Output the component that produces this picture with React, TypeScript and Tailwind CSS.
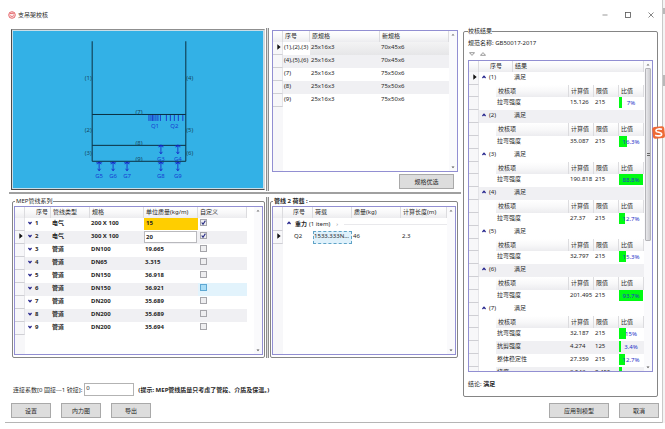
import React from "react";

type Pipe = { id: number; kind: string; spec: string; mass: string; custom: boolean };
type Check = { name: string; value: string; limit: string; ratio: number };
type Result = { id: string; checks: Check[] };

const specs = [
  ["(1),(2),(3)", "25x16x3", "70x45x6"],
  ["(4),(5),(6)", "25x16x3", "70x45x6"],
  ["(7)", "25x16x3", "75x50x6"],
  ["(8)", "25x16x3", "75x50x6"],
  ["(9)", "25x16x3", "75x50x6"],
];

const pipes: Pipe[] = [
  { id: 1, kind: "电气", spec: "200 X 100", mass: "15", custom: true },
  { id: 2, kind: "电气", spec: "300 X 100", mass: "20", custom: true },
  { id: 3, kind: "管道", spec: "DN100", mass: "19.665", custom: false },
  { id: 4, kind: "管道", spec: "DN65", mass: "3.315", custom: false },
  { id: 5, kind: "管道", spec: "DN150", mass: "36.918", custom: false },
  { id: 6, kind: "管道", spec: "DN150", mass: "36.921", custom: false },
  { id: 7, kind: "管道", spec: "DN200", mass: "35.689", custom: false },
  { id: 8, kind: "管道", spec: "DN200", mass: "35.689", custom: false },
  { id: 9, kind: "管道", spec: "DN200", mass: "35.694", custom: false },
];

const results: Result[] = [
  { id: "(1)", checks: [{ name: "拉弯强度", value: "15.126", limit: "215", ratio: 7 }] },
  { id: "(2)", checks: [{ name: "拉弯强度", value: "35.087", limit: "215", ratio: 16.3 }] },
  { id: "(3)", checks: [{ name: "拉弯强度", value: "190.818", limit: "215", ratio: 88.8 }] },
  { id: "(4)", checks: [{ name: "拉弯强度", value: "27.37", limit: "215", ratio: 12.7 }] },
  { id: "(5)", checks: [{ name: "拉弯强度", value: "32.797", limit: "215", ratio: 15.3 }] },
  { id: "(6)", checks: [{ name: "拉弯强度", value: "201.495", limit: "215", ratio: 93.7 }] },
  {
    id: "(7)",
    checks: [
      { name: "抗弯强度", value: "32.187", limit: "215", ratio: 15 },
      { name: "抗剪强度", value: "4.274", limit: "125", ratio: 3.4 },
      { name: "整体稳定性", value: "27.359", limit: "215", ratio: 12.7 },
      { name: "挠度", value: "0.543", limit: "8.455", ratio: 6.4 },
    ],
  },
];

const headCell =
  "border-r border-[#dcdcdf] bg-linear-to-b from-white via-[#f8f8f9] to-[#ececef] p-0 pl-[2px] text-left align-middle font-normal leading-[11px] whitespace-nowrap";
const gutter = "border-r border-b border-r-[#e4e4e8] border-b-[#cfcfd4] bg-[#f7f7f9] p-0 align-top";
const cell = "overflow-hidden p-0 pl-[1px] align-top leading-[10px] whitespace-nowrap";

function Marker() {
  return (
    <svg viewBox="0 0 4 6" className="mt-[2px] ml-[4px] block h-[6px] w-[4px]">
      <path d="M0.3 0.3 3.7 3 0.3 5.7Z" fill="#111" />
    </svg>
  );
}

function Chevron({ up = false }: { up?: boolean }) {
  return (
    <svg viewBox="0 0 4 4" className="mt-[3px] block size-[4px]">
      <path
        d={up ? "M0.4 3 2 1.3 3.6 3" : "M0.4 1 2 2.7 3.6 1"}
        fill="none"
        stroke="#23238c"
        strokeWidth="1.3"
      />
    </svg>
  );
}

function ScrollBar({ thumb = false }: { thumb?: boolean }) {
  return (
    <div className="flex w-[8px] shrink-0 flex-col items-center bg-[#fafafc] py-[2px]">
      <svg viewBox="0 0 4 3" className="h-[3px] w-[4px]">
        <path d="M0.5 2.5 2 0.7 3.5 2.5Z" fill="#777" />
      </svg>
      <div className="flex w-full flex-1 flex-col px-px pt-[2px]">
        {thumb && (
          <div className="flex h-[173px] flex-col items-center justify-center gap-px rounded-[1px] border border-[#b4b4b8] bg-linear-to-r from-[#e9e9ec] to-[#cdcdd1]">
            <i className="h-px w-[3px] bg-[#666]" />
            <i className="h-px w-[3px] bg-[#666]" />
          </div>
        )}
      </div>
      <svg viewBox="0 0 4 3" className="h-[3px] w-[4px]">
        <path d="M0.5 0.5 2 2.3 3.5 0.5Z" fill="#555" />
      </svg>
    </div>
  );
}

function Grid({ children, className = "", thumb = false }: { children: React.ReactNode; className?: string; thumb?: boolean }) {
  return (
    <div className={`flex overflow-hidden border border-[#928fd2] bg-white ${className}`}>
      <div className="flex min-w-0 flex-1 flex-col">
        {children}
        <div className="w-[10px] flex-1 bg-[#f7f7f9]" />
      </div>
      <ScrollBar thumb={thumb} />
    </div>
  );
}

function Button({ children, className = "" }: { children: React.ReactNode; className?: string }) {
  return (
    <button className={`h-[15px] shrink-0 border border-[#a9a9a9] bg-[#dddddd] leading-[12px] ${className}`}>
      {children}
    </button>
  );
}

function Load({ x, y, label }: { x: number; y: number; label: string }) {
  return (
    <g>
      <path
        d={`M${x} ${y}V${y + 9}M${x - 3} ${y + 1}H${x + 3}M${x - 2} ${y + 2.5}L${x} ${y}L${x + 2} ${y + 2.5}M${x - 1.5} ${y + 7}L${x} ${y + 9}L${x + 1.5} ${y + 7}`}
        stroke="#1422c8"
        strokeWidth="0.8"
        fill="none"
      />
      <text x={x} y={y + 16.5} textAnchor="middle" fill="#1740d2">
        {label}
      </text>
    </g>
  );
}

function FrameDrawing() {
  const members: [number, number, string][] = [
    [75.5, 49, "(1)"],
    [75.5, 101, "(2)"],
    [75.5, 124, "(3)"],
    [177.5, 49, "(4)"],
    [177.5, 101, "(5)"],
    [177.5, 124, "(6)"],
    [126.5, 83, "(7)"],
    [126.5, 114, "(8)"],
    [126.5, 130, "(9)"],
  ];
  const ticks = [136.5, 138.5, 140, 141.5, 143.5, 145.5, 148, 154, 158, 162, 166, 170.5];
  return (
    <svg viewBox="0 0 251 157" className="block h-[157px] w-full text-[6px]">
      <path
        d="M79.5 10V130.5H173.5V10M79.5 83.5H173.5M79.5 114.5H173.5"
        fill="none"
        stroke="#0b2e3f"
        strokeWidth="1"
      />
      {members.map(([x, y, t]) => (
        <text key={t} x={x} y={y} textAnchor="middle" fill="#17475f">
          {t}
        </text>
      ))}
      {ticks.map((x) => (
        <path key={x} d={`M${x} 84V90`} stroke="#1422c8" strokeWidth="0.8" />
      ))}
      <text x="142.5" y="97" textAnchor="middle" fill="#1740d2">Q1</text>
      <text x="162" y="97" textAnchor="middle" fill="#1740d2">Q2</text>
      <Load x={148.5} y={114} label="G3" />
      <Load x={165.5} y={114} label="G4" />
      <Load x={86.5} y={131} label="G5" />
      <Load x={100.5} y={131} label="G6" />
      <Load x={114.5} y={131} label="G7" />
      <Load x={148.5} y={131} label="G8" />
      <Load x={165.5} y={131} label="G9" />
    </svg>
  );
}

function SpecTable() {
  return (
    <table className="w-full table-fixed border-separate border-spacing-0">
      <colgroup>
        <col className="w-[10px]" />
        <col className="w-[27px]" />
        <col className="w-[70px]" />
        <col />
      </colgroup>
      <thead>
        <tr>
          <th className={headCell} />
          <th className={headCell}>序号</th>
          <th className={headCell}>原规格</th>
          <th className={headCell}>新规格</th>
        </tr>
      </thead>
      <tbody>
        {specs.map((row, i) => (
          <tr key={row[0]} className={i % 2 ? "h-[13px] bg-[#f0f0f3]" : "h-[13px]"}>
            <td className={gutter}>{i === 0 && <Marker />}</td>
            {row.map((text, c) => (
              <td
                key={c}
                className={`${cell} ${i === 0 && c > 0 ? "bg-linear-to-b from-[#f3f3f4] to-[#e6e6e8]" : ""}`}
              >
                {text}
              </td>
            ))}
          </tr>
        ))}
      </tbody>
    </table>
  );
}

function PipeTable() {
  return (
    <table className="w-full table-fixed border-separate border-spacing-0">
      <colgroup>
        <col className="w-[10px]" />
        <col className="w-[9px]" />
        <col className="w-[17px]" />
        <col className="w-[39px]" />
        <col className="w-[54px]" />
        <col className="w-[54px]" />
        <col className="w-[49px]" />
        <col />
      </colgroup>
      <thead>
        <tr>
          <th className={headCell} />
          <th colSpan={2} className={headCell}>
            <span className="pl-[9px]">序号</span>
          </th>
          <th className={headCell}>管线类型</th>
          <th className={headCell}>规格</th>
          <th className={headCell}>单位质量(kg/m)</th>
          <th className={headCell}>自定义</th>
          <th className="p-0" />
        </tr>
      </thead>
      <tbody className="font-bold">
        {pipes.map((p, i) => {
          const stripe = i % 2 ? "bg-[#f0f0f3]" : "";
          return (
            <tr key={p.id} className="h-[13px]">
              <td className={gutter}>{p.id === 2 && <Marker />}</td>
              <td className={`p-0 pl-[3px] align-top ${stripe}`}>
                <Chevron />
              </td>
              <td className={`${cell} ${stripe}`}>{p.id}</td>
              <td className={`${cell} ${stripe}`}>{p.kind}</td>
              <td className={`${cell} ${stripe}`}>{p.spec}</td>
              <td className={`${cell} ${stripe}`}>
                {p.id === 1 ? (
                  <div className="-ml-px h-[12px] bg-[#ffce00] pl-[2px] leading-[10px]">{p.mass}</div>
                ) : p.id === 2 ? (
                  <input
                    aria-label="单位质量"
                    defaultValue={p.mass}
                    className="-ml-px block h-[12px] w-[53px] border border-[#b9b9bd] bg-white pl-px leading-[10px]"
                  />
                ) : (
                  p.mass
                )}
              </td>
              <td className={`p-0 pl-[2px] align-top ${p.id === 6 ? "bg-[#e2f3fc]" : stripe}`}>
                <label className="relative mt-px block size-[7px]">
                  <input
                    type="checkbox"
                    aria-label={`自定义 ${p.id}`}
                    defaultChecked={p.custom}
                    className={`peer block size-[7px] appearance-none border ${
                      p.id === 6 ? "border-[#5fa8d3] bg-[#a9dcf5]" : "border-[#a5a5aa] bg-[#eeeef0]"
                    }`}
                  />
                  <svg viewBox="0 0 7 7" className="absolute inset-0 hidden size-[7px] peer-checked:block">
                    <path d="M1.7 3.5 3 5.2 5.4 1.6" fill="none" stroke="#2b2f86" strokeWidth="1.1" />
                  </svg>
                </label>
              </td>
              <td className="p-0" />
            </tr>
          );
        })}
      </tbody>
    </table>
  );
}

function LoadTable() {
  return (
    <table className="w-full table-fixed border-separate border-spacing-0">
      <colgroup>
        <col className="w-[10px]" />
        <col className="w-[10px]" />
        <col className="w-[20px]" />
        <col className="w-[39px]" />
        <col className="w-[49px]" />
        <col />
      </colgroup>
      <thead>
        <tr>
          <th className={headCell} />
          <th colSpan={2} className={headCell}>
            <span className="pl-[8px]">序号</span>
          </th>
          <th className={headCell}>荷载</th>
          <th className={headCell}>质量(kg)</th>
          <th className={headCell}>计算长度(m)</th>
        </tr>
      </thead>
      <tbody>
        <tr className="h-[13px]">
          <td className={gutter} />
          <td className="p-0 pl-[4px] align-top">
            <Chevron up />
          </td>
          <td colSpan={4} className="p-0 pl-[2px] align-top leading-[12px]">
            <div className="flex items-center">
              <b>重力</b>
              <span className="pl-[2px]">(1 item)</span>
              <span className="px-[6px] text-[#888]">›</span>
              <span className="h-px flex-1 bg-[#e9e9ec]" />
            </div>
          </td>
        </tr>
        <tr className="h-[13px]">
          <td className={gutter}>
            <Marker />
          </td>
          <td className="p-0" />
          <td className={cell}>Q2</td>
          <td className="p-0 align-top">
            <div className="h-[13px] overflow-hidden border border-dashed border-[#5fa3c7] bg-[#dff1fb] leading-[9px] text-ellipsis whitespace-nowrap">
              1533.333N/m
            </div>
          </td>
          <td className={cell}>46</td>
          <td className={cell}>2.3</td>
        </tr>
      </tbody>
    </table>
  );
}

function ResultTable() {
  return (
    <table className="w-full shrink-0 table-fixed border-separate border-spacing-0">
      <colgroup>
        <col className="w-[10px]" />
        <col className="w-[9px]" />
        <col className="w-[8px]" />
        <col className="w-[17px]" />
        <col />
        <col className="w-[25px]" />
        <col className="w-[25px]" />
        <col className="w-[25px]" />
      </colgroup>
      <thead>
        <tr>
          <th className={headCell} />
          <th colSpan={3} className={headCell}>
            <span className="pl-[9px]">序号</span>
          </th>
          <th colSpan={4} className={headCell}>结果</th>
        </tr>
      </thead>
      <tbody>
        {results.map((r, i) => {
          const stripe = i % 2 ? "bg-[#f0f0f3]" : "";
          return (
            <React.Fragment key={r.id}>
              <tr className="h-[13px]">
                <td className={gutter}>{i === 0 && <Marker />}</td>
                <td className={`p-0 pl-[3px] align-top ${stripe}`}>
                  <Chevron up />
                </td>
                <td colSpan={2} className={`${cell} ${stripe}`}>{r.id}</td>
                <td colSpan={4} className={`${cell} ${stripe}`}>满足</td>
              </tr>
              <tr className={i % 2 ? "h-[13px]" : "h-[12px]"}>
                <td className={gutter} />
                <td colSpan={2} className="p-0" />
                <th colSpan={2} className={headCell}>校核项</th>
                <th className={headCell}>计算值</th>
                <th className={headCell}>限值</th>
                <th className={headCell}>比值</th>
              </tr>
              {r.checks.map((c, j) => {
                const shade = j % 2 ? "bg-[#f0f0f3]" : "";
                return (
                  <tr key={c.name} className="h-[13px]">
                    <td className={gutter} />
                    <td colSpan={2} className="p-0" />
                    <td colSpan={2} className={`${cell} ${shade}`}>{c.name}</td>
                    <td className={`${cell} ${shade}`}>{c.value}</td>
                    <td className={`${cell} ${shade}`}>{c.limit}</td>
                    <td className={`p-0 align-top ${shade}`}>
                      <div className="relative h-[11px] w-[24px]">
                        <div className="h-[11px] bg-[#00fb12]" style={{ width: `${Math.min(c.ratio * 2, 100)}%` }} />
                        <span className="absolute inset-0 text-center leading-[12px] text-[#2430c8]">{c.ratio}%</span>
                      </div>
                    </td>
                  </tr>
                );
              })}
            </React.Fragment>
          );
        })}
      </tbody>
    </table>
  );
}

export default function App() {
  return (
    <div className="relative flex bg-white font-['Noto_Sans','Noto_Sans_CJK_SC',sans-serif] text-[6px] leading-[10px] text-[#262626]">
      <div className="ml-[5px] flex min-w-0 flex-1 flex-col border-b border-[#b5b5b5] pb-[4px]">
        <header className="flex h-[28px] items-center pt-[2px] pr-[8px] pl-[3px]">
          <svg viewBox="0 0 8 8" className="size-[8px]">
            <circle cx="4" cy="4" r="3.3" fill="#fdeeee" stroke="#e0474c" strokeWidth="0.8" />
            <path d="M1.8 3.2 3 2 3.6 3 4.5 1.8 5 3 6.2 2.6M2 4.6Q4 6.8 6.2 4.4" fill="none" stroke="#e0474c" strokeWidth="0.7" />
          </svg>
          <h1 className="flex-1 pl-[2px]">支吊架校核</h1>
          <div className="flex items-center gap-[17px] text-[#555]">
            <button aria-label="最小化">
              <svg viewBox="0 0 6 6" className="block size-[6px]">
                <path d="M0.5 3H5.5" stroke="currentColor" strokeWidth="0.6" />
              </svg>
            </button>
            <button aria-label="最大化">
              <svg viewBox="0 0 6 6" className="block size-[6px]">
                <rect x="0.5" y="0.5" width="5" height="5" fill="none" stroke="currentColor" strokeWidth="0.8" />
              </svg>
            </button>
            <button aria-label="关闭">
              <svg viewBox="0 0 6 6" className="block size-[6px]">
                <path d="M0.5 0.5 5.5 5.5M5.5 0.5 0.5 5.5" stroke="currentColor" strokeWidth="0.7" />
              </svg>
            </button>
          </div>
        </header>

        <div className="flex gap-[2px] pr-[4px] pl-[4px]">
          <main className="flex min-w-0 flex-1 flex-col">
            <div className="flex h-[163px]">
              <div className="min-w-0 flex-1 pt-px pr-px pl-[2px]">
                <div className="border border-t-[#8f8f8f] border-r-[#d5d5d5] border-b-[#4c4c4c] border-l-[#4c4c4c]">
                  <div className="border border-[#c9dde6] bg-[#33b1e6]">
                    <FrameDrawing />
                  </div>
                </div>
              </div>
              <div className="w-[3px] border-x border-[#8d8d8d] bg-[#dedede]" />
              <div className="flex w-[192px] flex-col pt-[2px] pr-[3px] pl-[3px]">
                <Grid className="h-[142px]">
                  <SpecTable />
                </Grid>
                <div className="flex justify-end pt-[2px] pr-[4px]">
                  <Button className="w-[55px]">规格优选</Button>
                </div>
              </div>
            </div>
            <div className="mt-px h-[2px] bg-[#a0a0a0]" />
            <div className="flex h-[164px] pt-[3px]">
              <fieldset className="mr-px ml-[3px] min-w-0 flex-1 rounded-[2px] border border-[#858585] px-px pb-px">
                <legend className="ml-[1px] h-[9px] px-[1px] leading-[8px]">MEP管线系列</legend>
                <Grid className="h-[149px]">
                  <PipeTable />
                </Grid>
              </fieldset>
              <div className="w-[3px] border-x border-[#8d8d8d] bg-[#dedede]" />
              <div className="flex w-[192px] pr-[3px] pl-px">
                <fieldset className="min-w-0 flex-1 rounded-[2px] border border-[#858585] px-px pb-px">
                  <legend className="ml-[1px] h-[9px] px-[1px] leading-[8px] font-bold">管线 2 荷载 :</legend>
                  <Grid className="h-[149px]">
                    <LoadTable />
                  </Grid>
                </fieldset>
              </div>
            </div>
            <div className="flex items-center pt-[25px] pl-[4px]">
              <label htmlFor="coef">连接系数[0 固接---1 铰接]:</label>
              <input id="coef" defaultValue="0" className="ml-[2px] h-[13px] w-[50px] border border-[#b3b3b3] bg-white pb-[3px] pl-px" />
              <b className="pl-[4px]">(提示: MEP管线质量只考虑了管段、介质及保温。)</b>
            </div>
          </main>

          <fieldset className="mt-[-1px] w-[195px] shrink-0 self-start rounded-[2px] border border-[#858585] pr-[4px] pb-[7px] pl-[4px]">
            <legend className="h-[8px] leading-[8px]">校核结果</legend>
            <div className="pt-[3px] leading-[10px]">规范名称: GB50017-2017</div>
            <div className="flex h-[12px] items-center gap-[5px] pl-px">
              <button aria-label="全部展开">
                <svg viewBox="0 0 6 4" className="block h-[4px] w-[6px]">
                  <path d="M0.5 0.7H5.5L3 3.4Z" fill="none" stroke="#555" strokeWidth="0.6" />
                </svg>
              </button>
              <button aria-label="全部折叠">
                <svg viewBox="0 0 6 4" className="block h-[4px] w-[6px]">
                  <path d="M0.5 3.3H5.5L3 0.6Z" fill="none" stroke="#555" strokeWidth="0.6" />
                </svg>
              </button>
            </div>
            <Grid className="h-[312px]" thumb>
              <ResultTable />
            </Grid>
            <div className="pt-[7px]">
              结论: <b>满足</b>
            </div>
          </fieldset>
        </div>

        <footer className="flex gap-[10px] pt-[6px] pr-[3px] pl-[6px]">
          <Button className="w-[40px]">设置</Button>
          <Button className="w-[40px]">内力图</Button>
          <Button className="w-[40px]">导出</Button>
          <div className="flex-1" />
          <Button className="w-[60px]">应用到模型</Button>
          <Button className="w-[40px]">取消</Button>
        </footer>
      </div>

      <aside className="flex w-[3px] flex-col border-l border-[#c9c9c9] bg-[#f4f4f4] pt-[8px]">
        <div className="h-[6px] bg-[#b9b9b9]" />
        <div className="mt-[61px] h-[11px] bg-[#b9b9b9]" />
      </aside>

      <svg viewBox="0 0 14 14" className="absolute top-[126px] right-0 size-[13px]">
        <rect x="0.6" y="0.6" width="13" height="12.8" rx="2.5" fill="#ee6a36" transform="rotate(-6 7 7)" />
        <path
          d="M10.8 3.6C8.5 2.7 4.2 2.9 4.2 5C4.2 7.1 10.4 6.4 10.4 8.8C10.4 11 5.8 11.1 3.4 9.9"
          fill="none"
          stroke="#fff"
          strokeWidth="1.7"
        />
      </svg>
    </div>
  );
}
